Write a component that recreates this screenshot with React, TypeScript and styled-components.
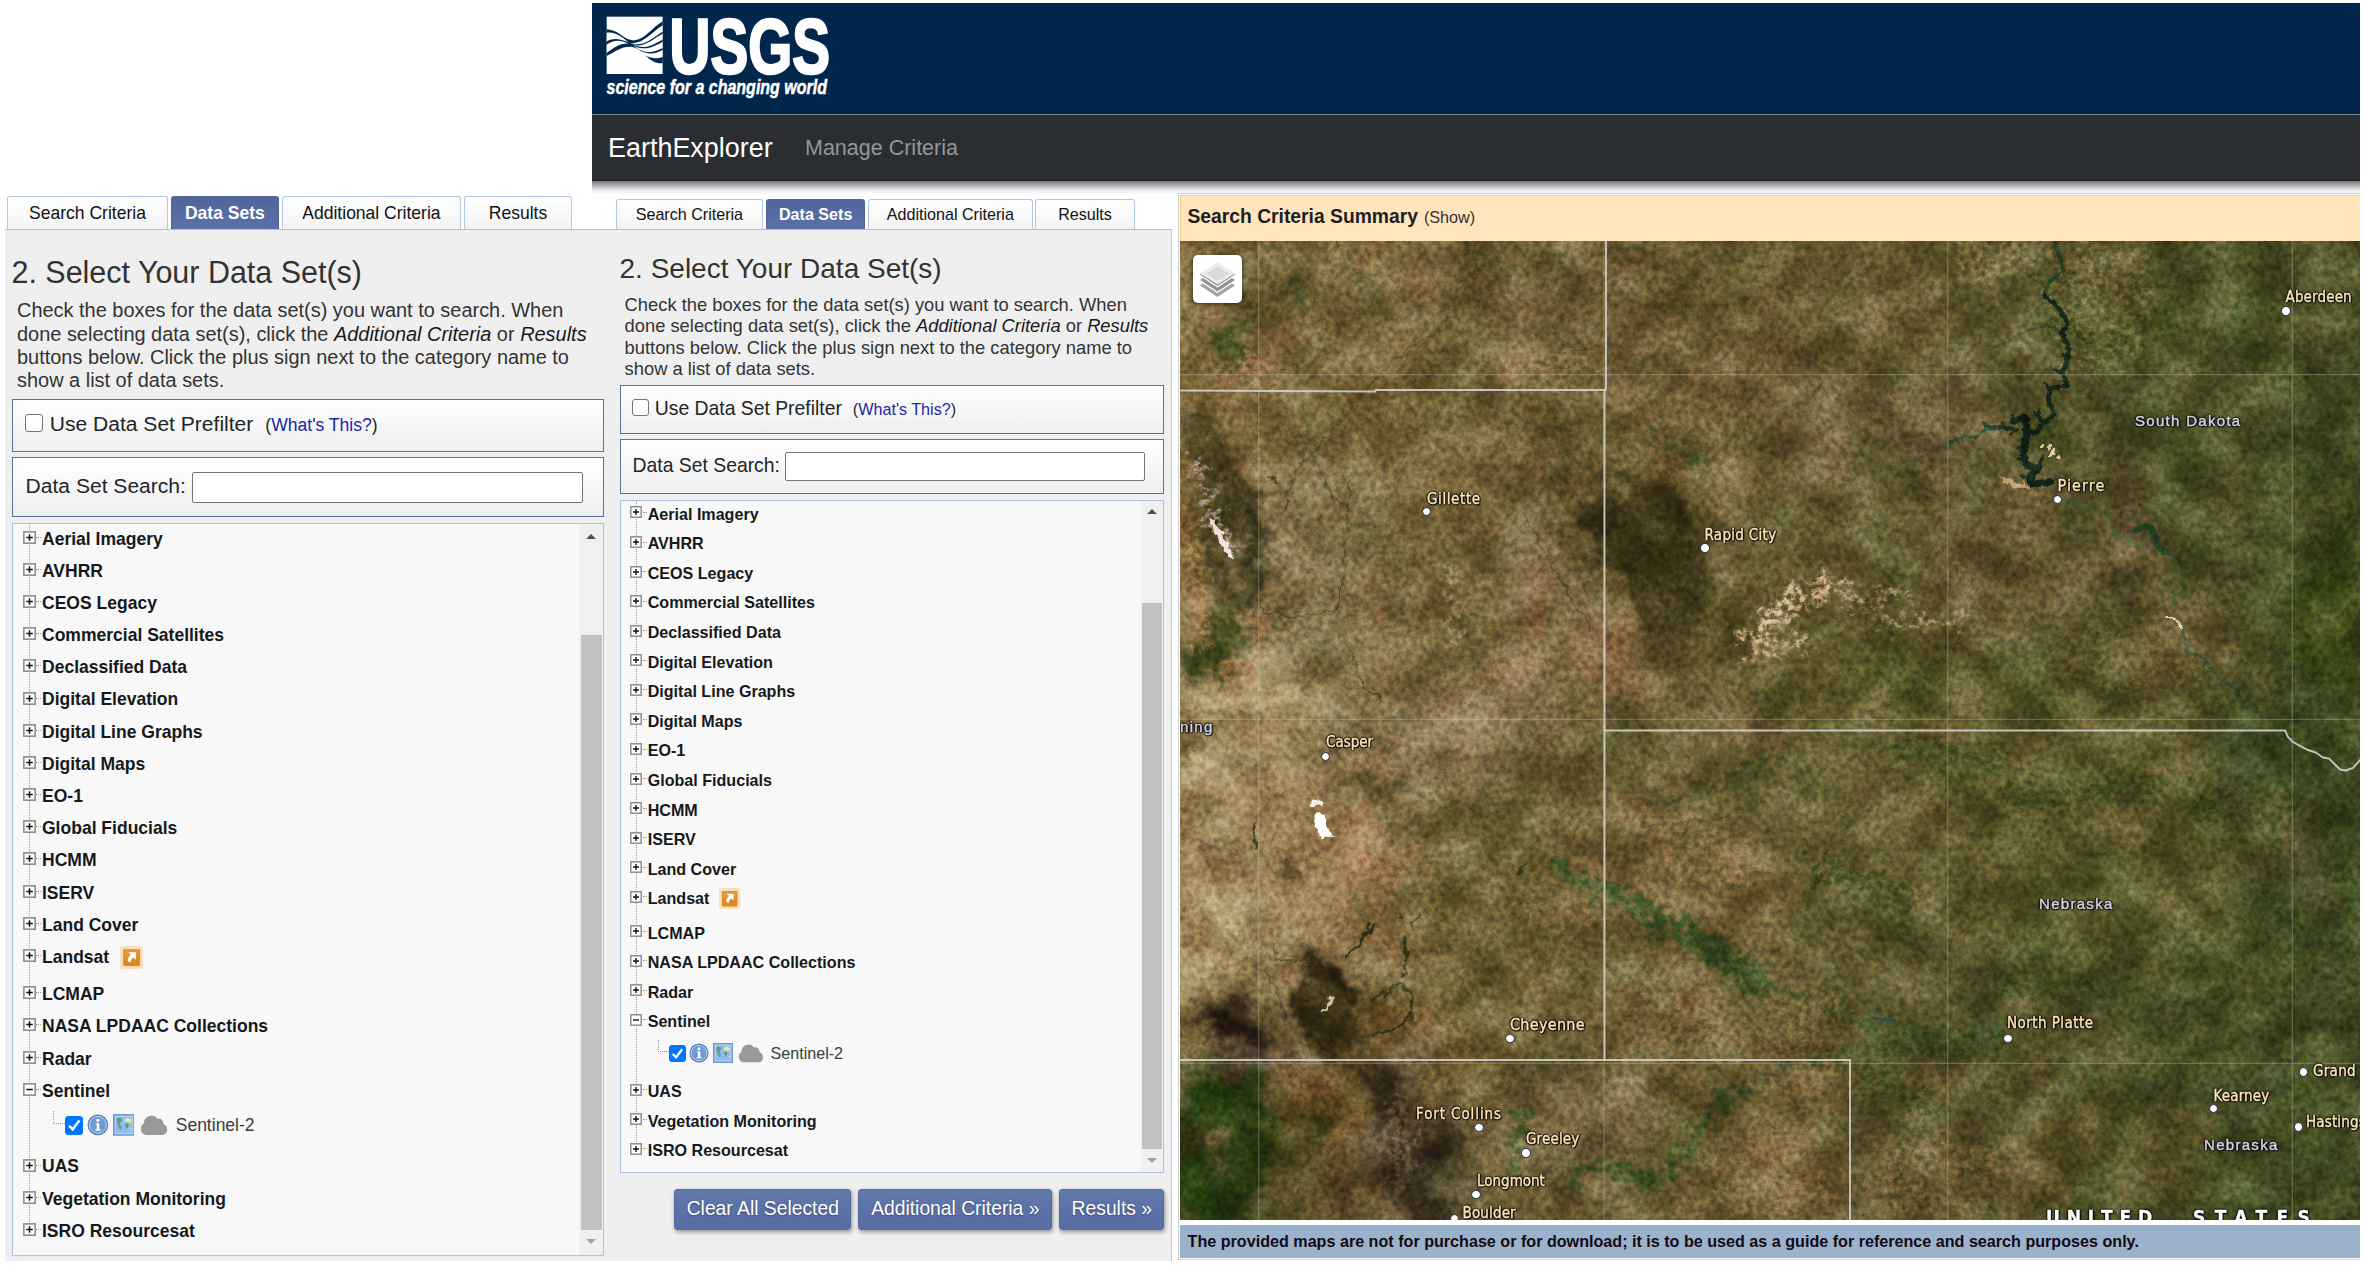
import React from 'react';
import styled, { createGlobalStyle, css, ThemeProvider } from 'styled-components';

const GlobalStyle = createGlobalStyle`
  html, body { margin: 0; padding: 0; background: #fff; }
  body { width: 2363px; height: 1266px; overflow: hidden; }
  *, *::before, *::after { box-sizing: border-box; }
`;

/* Panel dimensions are written at scale 1 and multiplied by the scale of the enclosing theme. */
const u = (n: number) => (p: any) => `${(n * p.theme.scale).toFixed(2)}px`;

const sans = `"Liberation Sans", Arial, sans-serif`;

const Page = styled.div`
  width: 2360px;
  height: 1261px;
  overflow: hidden;
  padding-top: 3px;
  font-family: ${sans};
  color: #212529;
  background: #fff;
`;

/* ---------- header ---------- */

const Header = styled.header`
  margin-left: 592px;
  height: 187px;
`;

const Brand = styled.div`
  height: 111px;
  background: #00264c;
  padding-left: 12px;
  svg { display: block; }
`;

const NavBar = styled.nav`
  height: 67px;
  display: flex;
  align-items: center;
  padding: 1px 18px 0;
  background: #2a2e32;
  border-top: 1px solid #85878d;
  border-bottom: 1px solid #1c1f24;
`;

const NavTitle = styled.span`
  font-size: 26.95px;
  color: #fff;
  width: 197px;
  margin-left: -2px;
`;

const NavLink = styled.span`
  font-size: 21.5px;
  color: #92979a;
`;

const NavShadow = styled.div`
  height: 13px;
  background: linear-gradient(#77777b, #b9b9bb 40%, #ececec 75%, #fff);
`;

/* ---------- data set panel ---------- */

const Body = styled.main`
  display: flex;
  height: 1071px;
  padding-left: 5px;
`;

const Panel = styled.section<{ $w: number; $pad: number; $edge?: boolean }>`
  width: ${(p) => p.$w}px;
  flex: none;
  height: 1071px;
  display: flex;
  flex-direction: column;
  overflow: hidden;
  --pad: ${(p) => p.$pad}px;
  ${(p) => p.$edge && css`.sheet { border-right: 1.5px solid #b4c8ec; }`}
`;

const Tabs = styled.div`
  height: 39px;
  flex: none;
  display: flex;
  align-items: flex-end;
  gap: ${u(2.7)};
  padding-left: calc(var(--pad) - ${u(4.4)});
`;

const Tab = styled.div<{ $w: number; $active?: boolean }>`
  width: ${(p) => u(p.$w)(p)};
  height: ${u(30.3)};
  display: flex;
  align-items: center;
  justify-content: center;
  font-size: ${u(16.1)};
  color: #111;
  border: 1px solid #b3c6ea;
  border-bottom: 0;
  border-radius: 3px 3px 0 0;
  background: linear-gradient(#fff, #f3f3f3);
  ${(p) =>
    p.$active &&
    css`
      color: #fff;
      font-weight: bold;
      border-color: #50659a;
      background: linear-gradient(#50659a, #5c71a8);
    `}
`;

const Sheet = styled.div`
  flex: 1;
  min-height: 0;
  background: #efefef;
  border-top: 1px solid #afc1e2;
  padding-left: var(--pad);
`;

const Inner = styled.div`
  width: ${u(544.3)};
`;

const Heading = styled.h2`
  margin: ${u(21.8)} 0 ${u(7.9)};
  font-weight: normal;
  font-size: ${u(28)};
  line-height: ${u(34)};
  margin-left: -0.5px;
  color: #333;
  white-space: nowrap;
`;

const Intro = styled.p`
  margin: 0 0 ${u(5.7)};
  padding-left: ${u(4.6)};
  font-size: ${u(18.34)};
  line-height: ${u(21.45)};
  color: #333;
  white-space: nowrap;
  em { color: #1a1a1a; }
`;

const Box = styled.div<{ $h: number }>`
  height: ${(p) => u(p.$h)(p)};
  margin-bottom: ${u(5.5)};
  display: flex;
  align-items: center;
  border: 1px solid #5872a3;
  background: linear-gradient(#fff, #eeeeee);
  padding: 0 0 ${u(1.7)} ${u(11.6)};
  font-size: ${u(19.35)};
  color: #212529;
  white-space: nowrap;
`;

const CheckBox = styled.span<{ $on?: boolean }>`
  width: ${u(17)};
  height: ${u(17)};
  flex: none;
  border: 1px solid #767676;
  border-radius: 3px;
  background: #fff;
  display: flex;
  ${(p) => p.$on && css`background: #0075ff; border-color: #0075ff;`}
  svg { width: 100%; height: 100%; }
`;

const PrefilterCheckBox = styled(CheckBox)`
  margin: ${u(-2)} 0 0 ${u(-0.6)};
`;

const BoxLabel = styled.span`
  margin-left: ${u(5.8)};
`;

const Hint = styled.span`
  margin: ${u(2)} 0 0 ${u(11)};
  font-size: ${u(16.15)};
  a { color: #1a27a8; }
`;

const SearchLabel = styled.span`
  width: ${u(152.5)};
`;

const SearchField = styled.input`
  width: ${u(360)};
  height: ${u(28.5)};
  margin: ${u(1.4)} 0 0;
  padding: 0;
  border: 1px solid #767676;
  border-radius: 2px;
  background: #fff;
`;

const ListBox = styled.div`
  height: ${u(673.7)};
  display: flex;
  overflow: hidden;
  background: #f8f8f8;
  border: 1px solid #b0c3e6;
`;

const Tree = styled.ul`
  flex: 1;
  height: max-content;
  margin: ${u(-1.15)} 0 0;
  padding: 0;
  list-style: none;
  background-image: repeating-linear-gradient(#9a9a9a 0 1px, transparent 1px 2px);
  background-repeat: no-repeat;
  background-size: 1px calc(100% - ${u(15)});
  background-position: ${u(14.6)} 0;
`;

const Row = styled.li`
  height: ${u(29.58)};
  display: flex;
  align-items: center;
  padding-left: ${u(9)};
  font-size: ${u(16.1)};
  font-weight: bold;
  color: #16181b;
  white-space: nowrap;
`;

const TallRow = styled(Row)`
  height: ${u(34.3)};
  padding-bottom: ${u(4.7)};
`;

const Toggle = styled.svg`
  width: ${u(12)};
  height: ${u(12)};
  flex: none;
  margin-top: ${u(-3.6)};
`;

const Dots = styled.span`
  width: ${u(4)};
  margin: ${u(-3.6)} ${u(1.2)} 0 ${u(0.5)};
  border-top: 1px dotted #9a9a9a;
`;

const OrangeIcon = styled.svg`
  width: ${u(21.4)};
  height: ${u(21.4)};
  margin-left: ${u(9.8)};
`;

const ChildRow = styled.li`
  height: ${u(40.1)};
  display: flex;
  align-items: center;
  padding: 0 0 ${u(7)} ${u(36.7)};
  font-size: ${u(16.1)};
  color: #3a3d40;
  svg { flex: none; }
`;

const Branch = styled.span`
  width: ${u(11)};
  height: ${u(12)};
  margin-top: ${u(-15)};
  border-left: 1px dotted #9a9a9a;
  border-bottom: 1px dotted #9a9a9a;
`;

const InfoSvg = styled.svg`
  width: ${u(20)};
  height: ${u(20)};
  margin-left: ${u(3.6)};
`;

const MapSvg = styled.svg`
  width: ${u(20)};
  height: ${u(20)};
  margin-left: ${u(3.4)};
`;

const CloudSvg = styled.svg`
  width: ${u(26.5)};
  height: ${u(19)};
  margin: 0 ${u(6)} 0 ${u(5.4)};
`;

const ScrollBar = styled.div`
  width: ${u(22.2)};
  flex: none;
  display: flex;
  flex-direction: column;
  align-items: center;
  background: #f0f0f0;
`;

const Arrow = styled.span<{ $down?: boolean }>`
  width: 0;
  height: 0;
  border: ${u(5)} solid transparent;
  border-top-width: 0;
  border-bottom: ${u(5)} solid #505050;
  margin-top: ${u(8.5)};
  ${(p) => p.$down && css`transform: rotate(180deg); border-bottom-color: #a3a3a3;`}
`;

const Thumb = styled.span`
  width: ${u(19.5)};
  height: ${u(546.5)};
  margin-top: ${u(88.9)};
  background: #c1c1c1;
`;

const Actions = styled.div`
  display: flex;
  justify-content: flex-end;
  gap: 7px;
  margin-top: 16px;
`;

const ActionButton = styled.button<{ $w: number }>`
  width: ${(p) => p.$w}px;
  height: 41px;
  padding: 0 0 2px;
  border: 1px solid #566b9f;
  border-radius: 3px;
  font-family: ${sans};
  font-size: 19.3px;
  color: #fff;
  background: linear-gradient(#6279ad, #566b9f);
  box-shadow: 1px 2px 4px rgba(0, 0, 0, 0.4);
  text-shadow: 0 1px 2px rgba(0, 0, 0, 0.35);
`;

/* ---------- map ---------- */

const MapFrame = styled.section`
  margin: 3px 0 0 6px;
  flex: 1;
  min-width: 0;
  display: flex;
  flex-direction: column;
  background: #fff;
  border: 1px solid #cbcfd6;
  border-right: 0;
  padding: 1px 0 0 1px;
  height: 1067px;
`;

const Summary = styled.div`
  height: 46px;
  flex: none;
  display: flex;
  align-items: baseline;
  padding: 9.5px 0 0 6.5px;
  gap: 6px;
  background: #ffe4bc;
  border: 1px solid #f6cb80;
  border-width: 1px 0 0 1px;
  font-size: 16.2px;
  line-height: 22px;
  color: #333;
  b { font-size: 19.3px; color: #1c1f22; }
`;

const MapCanvas = styled.div`
  position: relative;
  height: 979px;
  flex: none;
  overflow: hidden;
  background: #6e5f35;
`;

const Imagery = styled.svg`
  display: block;
`;

const GrainLayer = styled.rect<{ $mode: string; $strength: number }>`
  mix-blend-mode: ${(p) => p.$mode};
  opacity: ${(p) => p.$strength};
`;

const Disclaimer = styled.div`
  height: 32.5px;
  margin-top: 5px;
  flex: none;
  display: flex;
  align-items: center;
  padding: 0 0 0 7.6px;
  background: #9bb2cc;
  font-size: 16.14px;
  font-weight: bold;
  color: #120a14;
  white-space: nowrap;
`;

const LayersButton = styled.div`
  position: absolute;
  left: 13px;
  top: 14px;
  width: 49px;
  height: 48px;
  border-radius: 5px;
  background: #fff;
  box-shadow: 0 1px 5px rgba(0, 0, 0, 0.6);
  display: flex;
  align-items: center;
  justify-content: center;
`;

const outline =
  '0 0 1px #111, 0 0 2px #111, 0 0 3px #111, 1px 0 1px #111, -1px 0 1px #111, 0 1px 1px #111, 0 -1px 1px #111, 1px 1px 1px #111';

const City = styled.span<{ $x: number; $y: number; $s?: number; $ls?: number }>`
  position: absolute;
  left: ${(p) => p.$x - 1180}px;
  top: ${(p) => p.$y - 241 - 14.5}px;
  line-height: 19px;
  font-family: "DejaVu Sans Condensed", "DejaVu Sans", sans-serif;
  font-stretch: condensed;
  font-size: ${(p) => p.$s ?? 15}px;
  letter-spacing: ${(p) => p.$ls ?? 0.15}px;
  color: #fbe3b2;
  -webkit-text-stroke: 0.35px #fbe3b2;
  text-shadow: ${outline};
  white-space: nowrap;
`;

const StateName = styled(City)`
  font-family: ${sans};
  font-size: 15px;
  letter-spacing: 1.3px;
  color: #d4d2e0;
  -webkit-text-stroke: 0.4px #d4d2e0;
`;

const Country = styled(City)`
  font-family: "DejaVu Sans", sans-serif;
  font-weight: bold;
  font-size: 19px;
  letter-spacing: ${(p) => p.$ls ?? 6}px;
  color: #fff;
  -webkit-text-stroke: 0.3px #fff;
`;

const Pin = styled.i<{ $x: number; $y: number }>`
  position: absolute;
  left: ${(p) => p.$x - 1184.7}px;
  top: ${(p) => p.$y - 245.7}px;
  width: 9.5px;
  height: 9.5px;
  border-radius: 50%;
  background: #fff;
  border: 1.5px solid #1b1f33;
`;

/* ---------- drawings ---------- */

const Logo = () => (
  <svg width="230" height="111" viewBox="604 3 230 111">
    <g transform="translate(580 0) scale(.33333)">
      <rect x="80" y="50" width="168" height="172" fill="#fff" />
      <path
        d="M80 88C120 90 132 124 165 121C198 116 215 84 248 64V190C205 192 195 152 158 141C130 136 110 152 80 168Z"
        fill="#00264c"
      />
      <g fill="#fff">
        <path d="M80 98C108 94 126 112 147 127C120 118 104 112 80 124Z" />
        <path d="M80 134C104 118 120 120 147 131C120 129 104 142 80 159Z" />
        <path d="M150 129C190 134 215 96 248 76V95C215 114 190 144 150 129Z" />
        <path d="M155 133C192 146 218 116 248 101V119C218 134 195 152 155 133Z" />
        <path d="M160 137C195 154 222 140 248 125V144C222 158 195 164 160 137Z" />
        <path d="M166 142C198 168 225 162 248 150V170C225 180 198 176 166 142Z" />
      </g>
    </g>
    <text x="669.500" y="73.200" fontFamily="Liberation Sans, Arial, sans-serif" fontWeight="bold" fontSize="78"
      textLength="160.500" lengthAdjust="spacingAndGlyphs" fill="#fff" stroke="#fff" strokeWidth="2.600">USGS</text>
    <text x="606.500" y="93.800" fontFamily="Liberation Sans, Arial, sans-serif" fontWeight="bold" fontStyle="italic"
      fontSize="20.500" textLength="220.500" lengthAdjust="spacingAndGlyphs" fill="#fff" stroke="#fff" strokeWidth=".5">
      science for a changing world
    </text>
  </svg>
);

const ToggleIcon = ({ open }: { open?: boolean }) => (
  <Toggle viewBox="0 0 12 12">
    <rect x=".8" y=".8" width="10.4" height="10.4" fill="#fff" stroke="#8f8f8f" strokeWidth="1.5" />
    <path d={open ? 'M3 6H9' : 'M3 6H9M6 3V9'} stroke="#111" strokeWidth="1.4" />
  </Toggle>
);

const LandsatIcon = () => (
  <OrangeIcon viewBox="0 0 22 22">
    <rect width="22" height="22" rx="3" fill="#f7dfc0" />
    <rect x="3" y="3" width="16" height="16" rx="1" fill="#dc8a22" />
    <rect x="4" y="4" width="14" height="6" fill="#e39a3e" />
    <path d="M8 6H15V13L12.9 10.9C11 12 10.3 13.2 10 15.5L7.3 14.2C7.5 11.5 8.5 9.9 10.2 8.3Z" fill="#fff" />
  </OrangeIcon>
);

const InfoIcon = () => (
  <InfoSvg viewBox="0 0 20 20">
    <circle cx="10" cy="10" r="9.5" fill="#4f80bd" />
    <circle cx="10" cy="10" r="7.8" fill="#6f9bd0" stroke="#c9dcf0" strokeWidth=".9" />
    <circle cx="10" cy="5.8" r="1.5" fill="#fff" />
    <path d="M8 8.5H11.3V14H12.5V15.3H7.8V14H9V9.7H8Z" fill="#fff" />
  </InfoSvg>
);

const FootprintIcon = () => (
  <MapSvg viewBox="0 0 20 20">
    <rect x=".7" y=".7" width="18.6" height="18.6" fill="#b4d4f8" stroke="#6f95cf" strokeWidth="1.4" />
    <rect x="2.5" y="2.5" width="15" height="15" fill="#8fbdf0" />
    <path d="M3.500 4.500L5.500 3.500L8 4L8.500 6L6.500 8L6.500 10L8 12L7 15L5.500 12.500L4.500 9.500L3.500 7Z" fill="#5f9a82" />
    <path d="M10.5 5L13 3.5L17 5L16.5 8L14.5 8L13 7L11 7.5Z" fill="#ece7a0" />
    <path d="M11 9L14 9L14.5 11L12.8 13.5L11.5 11Z" fill="#5c9a80" />
    <path d="M15 12.5L16.8 13L16 14.5Z" fill="#dfe09a" />
  </MapSvg>
);

const CloudIcon = () => (
  <CloudSvg viewBox="0 0 27 19">
    <path
      d="M6 18.5A5.8 5.8 0 0 1 3.6 7.8A7.2 7.2 0 0 1 16.5 3.3A4.3 4.3 0 0 1 21.8 8.2A5.4 5.4 0 0 1 21.5 18.5Z"
      fill="#999"
    />
  </CloudSvg>
);

const LayersIcon = () => (
  <svg width="37" height="37" viewBox="0 0 37 37">
    <path d="M18.5 36L1 24.5L4 22.5L18.5 32L33 22.5L36 24.5Z" fill="#a5a5a5" />
    <path d="M18.5 30.5L1 19L4 17L18.5 26.5L33 17L36 19Z" fill="#949494" />
    <path d="M18.5 25L1 13.5L18.5 2L36 13.5Z" fill="#8f8f8f" />
    <path d="M18.5 23.5L1 12.5L18.5 1.5L36 12.5Z" fill="#ececec" />
    <path d="M18.5 20L7 12.5L18.5 5.5L30 12.5Z" fill="#dadada" />
  </svg>
);

/* Soft ground-colour patches: centre, radii, rotation, colour, opacity. */
type Patch = [number, number, number, number, number, string, number];
const patches: Patch[] = [
  [1300, 310, 150, 70, 0, '#7a663b', 0.8],
  [1520, 290, 110, 60, 0, '#74603a', 0.7],
  [1800, 290, 170, 90, 0, '#6a5a31', 0.8],
  [1720, 370, 110, 50, 0, '#745c36', 0.7],
  [2230, 280, 150, 90, 0, '#535328', 0.8],
  [1290, 580, 60, 110, 0, '#96835c', 0.85],
  [1350, 560, 60, 100, 0, '#84734b', 0.8],
  [1260, 710, 100, 60, 0, '#ad9a6b', 0.9],
  [1280, 830, 120, 110, 0, '#ad9163', 0.95],
  [1215, 940, 60, 60, 0, '#b09a68', 0.8],
  [1300, 960, 60, 50, 0, '#9c855a', 0.7],
  [1190, 600, 26, 80, 0, '#a07a4a', 0.8],
  [1380, 860, 40, 90, -20, '#a37c50', 0.8],
  [1440, 720, 120, 60, -20, '#957b58', 0.85],
  [1450, 800, 60, 60, 0, '#80704a', 0.7],
  [1560, 590, 26, 110, -30, '#927658', 0.8],
  [1600, 650, 34, 60, -30, '#a07450', 0.7],
  [1430, 930, 30, 150, 0, '#7d6a3c', 0.8],
  [1490, 930, 70, 140, 0, '#6e6233', 0.85],
  [1560, 430, 55, 50, 0, '#5b4d25', 0.5],
  [1720, 620, 90, 90, 0, '#67592f', 0.6],
  [1660, 460, 70, 50, 0, '#7b6038', 0.6],
  [1900, 430, 140, 50, -10, '#76613f', 0.75],
  [2000, 560, 90, 80, 0, '#6f5a36', 0.7],
  [2150, 560, 80, 90, 0, '#6b5432', 0.6],
  [2240, 430, 120, 130, 0, '#4c5026', 0.6],
  [1900, 680, 170, 40, 0, '#5c5a28', 0.7],
  [2340, 620, 40, 110, 0, '#33420f', 0.8],
  [2180, 660, 70, 60, 0, '#69552f', 0.6],
  [2310, 820, 80, 150, 0, '#3c4a20', 0.8],
  [2080, 830, 190, 140, 0, '#605b2c', 0.8],
  [1820, 820, 120, 110, 0, '#6c6236', 0.8],
  [1690, 880, 110, 70, 20, '#7d653b', 0.8],
  [2290, 860, 45, 16, 35, '#6f5538', 0.6],
  [2240, 1010, 140, 80, 0, '#484f24', 0.8],
  [1680, 1010, 110, 50, 0, '#7f6940', 0.75],
  [1800, 1110, 60, 60, 0, '#84683f', 0.7],
  [1760, 1190, 90, 50, 0, '#80653c', 0.7],
  [1930, 1180, 90, 50, 0, '#745f38', 0.75],
  [1900, 1080, 90, 50, 0, '#5a5428', 0.6],
  [2110, 1150, 110, 70, 0, '#5f552b', 0.8],
  [2060, 1050, 60, 14, 15, '#6e5630', 0.6],
  [1580, 1130, 80, 60, 0, '#7b6745', 0.75],
  [1215, 1165, 75, 100, 0, '#28380f', 1],
  [1200, 1130, 22, 22, 0, '#7a6138', 0.7],
  [1325, 1120, 38, 70, 0, '#755828', 0.9],
  [1410, 1160, 48, 100, -10, '#30241a', 0.95],
  [1330, 1195, 30, 30, 0, '#4b371c', 0.8],
  [1250, 1050, 60, 28, 25, '#3c2c1e', 0.85],
  [1385, 1040, 30, 50, -15, '#5f4822', 0.6],
  [1412, 1030, 16, 34, 10, '#a0763c', 0.7],
];

const forests: Patch[] = [
  [1205, 440, 22, 36, -25, '#463f1e', 0.8],
  [1226, 490, 22, 50, -30, '#3f3a1c', 0.8],
  [1252, 560, 14, 70, 0, '#3b381c', 0.85],
  [1215, 560, 16, 60, 0, '#45401e', 0.8],
  [1222, 640, 14, 50, 15, '#3d4518', 0.8],
  [1197, 655, 22, 22, 0, '#2e3d14', 0.8],
  [1226, 340, 8, 24, 15, '#2d4415', 0.85],
  [1248, 320, 10, 8, 0, '#2d4415', 0.7],
  [1300, 290, 12, 18, 0, '#3f451d', 0.7],
  [1368, 300, 12, 32, 10, '#4a491f', 0.7],
  [1640, 530, 56, 52, 0, '#3d3618', 0.92],
  [1668, 580, 38, 70, -12, '#3d3718', 0.85],
  [1604, 500, 22, 20, 0, '#423a1c', 0.8],
  [1560, 455, 10, 34, 15, '#484120', 0.7],
  [1560, 420, 30, 30, 0, '#574b24', 0.5],
  [1580, 565, 8, 50, -25, '#4a3c20', 0.4],
  [1225, 762, 50, 5, 20, '#6a5f37', 0.6],
  [1372, 782, 45, 8, -10, '#4f4c24', 0.6],
  [1390, 815, 14, 40, -40, '#5e5530', 0.6],
  [1290, 868, 13, 10, 0, '#4d3b1f', 0.85],
  [1206, 850, 15, 5, 15, '#4d3b1f', 0.8],
  [1240, 870, 26, 5, 12, '#6d5434', 0.7],
  [1300, 957, 7, 9, 0, '#463820', 0.8],
  [1325, 1005, 26, 48, -12, '#2e270f', 0.95],
  [1342, 1040, 18, 26, -20, '#3a2f14', 0.8],
  [1235, 1030, 46, 16, 35, '#2a1e16', 0.9],
  [1375, 1090, 10, 30, -30, '#2c2015', 0.8],
  [1210, 1100, 26, 26, 0, '#24400f', 0.85],
  [1250, 1130, 22, 60, 0, '#26380f', 0.85],
  [1205, 1190, 30, 30, 0, '#22400f', 0.8],
];

const drawPatch = ([cx, cy, rx, ry, rot, fill, o]: Patch, i: number) => (
  <ellipse key={i} cx={cx} cy={cy} rx={rx} ry={ry} fill={fill} opacity={o} transform={`rotate(${rot} ${cx} ${cy})`} />
);

const Satellite = () => (
  <Imagery width="1180" height="979" viewBox="1180 241 1180 979">
    <defs>
      <linearGradient id="ground" x1="0" x2="1" y1="0" y2="0.15">
        <stop offset="0" stopColor="#88703f" />
        <stop offset=".3" stopColor="#7a663b" />
        <stop offset=".55" stopColor="#6a5e33" />
        <stop offset=".8" stopColor="#56552b" />
        <stop offset="1" stopColor="#454e24" />
      </linearGradient>
      <filter id="terrain" x="-5%" y="-5%" width="110%" height="110%" colorInterpolationFilters="sRGB">
        <feGaussianBlur stdDeviation="18" result="b" />
        <feTurbulence type="fractalNoise" baseFrequency=".014" numOctaves="6" seed="4" result="n" />
        <feDisplacementMap in="b" in2="n" scale="110" xChannelSelector="R" yChannelSelector="G" />
      </filter>
      <filter id="woods" x="-5%" y="-5%" width="110%" height="110%" colorInterpolationFilters="sRGB">
        <feGaussianBlur stdDeviation="6" result="b" />
        <feTurbulence type="fractalNoise" baseFrequency=".035" numOctaves="5" seed="9" result="n" />
        <feDisplacementMap in="b" in2="n" scale="50" xChannelSelector="R" yChannelSelector="G" />
      </filter>
      <filter id="rough" x="-5%" y="-5%" width="110%" height="110%" colorInterpolationFilters="sRGB">
        <feTurbulence type="fractalNoise" baseFrequency=".1" numOctaves="3" seed="2" result="n" />
        <feDisplacementMap in="SourceGraphic" in2="n" scale="11" xChannelSelector="R" yChannelSelector="G" result="d" />
        <feGaussianBlur in="d" stdDeviation=".6" />
      </filter>
      <filter id="shreds" x="-5%" y="-5%" width="110%" height="110%" colorInterpolationFilters="sRGB">
        <feGaussianBlur in="SourceGraphic" stdDeviation="3" result="s" />
        <feTurbulence type="fractalNoise" baseFrequency=".07" numOctaves="5" seed="12" result="n" />
        <feDisplacementMap in="s" in2="n" scale="46" xChannelSelector="R" yChannelSelector="G" result="d" />
        <feTurbulence type="fractalNoise" baseFrequency=".17 .2" numOctaves="4" seed="5" result="t" />
        <feColorMatrix in="t" type="matrix" values="0 0 0 0 0 0 0 0 0 0 0 0 0 0 0 4 0 0 0 -1.5" result="m" />
        <feComposite in="d" in2="m" operator="in" result="c" />
        <feGaussianBlur in="c" stdDeviation=".7" />
      </filter>
      <filter id="valley" x="-5%" y="-5%" width="110%" height="110%" colorInterpolationFilters="sRGB">
        <feGaussianBlur in="SourceGraphic" stdDeviation="3.500" result="s" />
        <feTurbulence type="fractalNoise" baseFrequency=".06" numOctaves="5" seed="17" result="n" />
        <feDisplacementMap in="s" in2="n" scale="34" xChannelSelector="R" yChannelSelector="G" result="d" />
        <feTurbulence type="fractalNoise" baseFrequency=".11" numOctaves="4" seed="8" result="t" />
        <feColorMatrix in="t" type="matrix" values="0 0 0 0 0 0 0 0 0 0 0 0 0 0 0 3 0 0 0 -.7" result="m" />
        <feComposite in="d" in2="m" operator="in" />
      </filter>
      <filter id="grainLarge" x="0" y="0" width="100%" height="100%" colorInterpolationFilters="sRGB">
        <feTurbulence type="fractalNoise" baseFrequency=".02 .024" numOctaves="8" seed="21" />
        <feColorMatrix type="matrix" values="2 0 0 0 -.55 2 0 0 0 -.55 2 0 0 0 -.55 0 0 0 0 1" />
      </filter>
      <filter id="grainStreak" x="0" y="0" width="100%" height="100%" colorInterpolationFilters="sRGB">
        <feTurbulence type="fractalNoise" baseFrequency=".012 .04" numOctaves="6" seed="3" />
        <feColorMatrix type="matrix" values="2.2 0 0 0 -.6 2.2 0 0 0 -.65 2.2 0 0 0 -.75 0 0 0 0 1" />
      </filter>
      <filter id="grainFine" x="0" y="0" width="100%" height="100%" colorInterpolationFilters="sRGB">
        <feTurbulence type="fractalNoise" baseFrequency=".17 .155" numOctaves="5" seed="7" />
        <feColorMatrix type="matrix" values="1.7 0 0 0 -.37 1.5 .2 0 0 -.37 1.5 0 .2 0 -.37 0 0 0 0 1" />
      </filter>
      <filter id="greens" x="0" y="0" width="100%" height="100%" colorInterpolationFilters="sRGB">
        <feTurbulence type="fractalNoise" baseFrequency=".014" numOctaves="8" seed="33" />
        <feColorMatrix type="matrix" values="0 0 0 0 .25 0 0 0 0 .33 0 0 0 0 .13 3 0 0 0 -1.35" />
      </filter>
      <filter id="browns" x="0" y="0" width="100%" height="100%" colorInterpolationFilters="sRGB">
        <feTurbulence type="fractalNoise" baseFrequency=".02" numOctaves="8" seed="51" />
        <feColorMatrix type="matrix" values="0 0 0 0 .6 0 0 0 0 .46 0 0 0 0 .3 3.5 0 0 0 -1.85" />
      </filter>
      <linearGradient id="eastFade" x1="0" x2="1">
        <stop offset="0" stopColor="#fff" stopOpacity=".3" />
        <stop offset="1" stopColor="#fff" stopOpacity=".8" />
      </linearGradient>
      <mask id="east">
        <rect x="1180" y="241" width="1180" height="979" fill="url(#eastFade)" />
      </mask>
      <linearGradient id="westFade" x1="0" x2="1">
        <stop offset="0" stopColor="#fff" stopOpacity=".6" />
        <stop offset=".5" stopColor="#fff" stopOpacity=".35" />
        <stop offset="1" stopColor="#fff" stopOpacity=".15" />
      </linearGradient>
      <mask id="west">
        <rect x="1180" y="241" width="1180" height="979" fill="url(#westFade)" />
      </mask>
    </defs>

    <rect x="1180" y="241" width="1180" height="979" fill="url(#ground)" />
    <g filter="url(#terrain)">{patches.map(drawPatch)}</g>
    <g mask="url(#east)" opacity=".6">
      <rect x="1180" y="241" width="1180" height="979" filter="url(#greens)" />
    </g>
    <g mask="url(#west)">
      <rect x="1180" y="241" width="1180" height="979" filter="url(#browns)" />
    </g>
    <g mask="url(#west)">
      <g transform="rotate(-58 1500 730)">
        <rect x="700" y="-100" width="1700" height="1700" filter="url(#grainStreak)" opacity=".12" />
      </g>
    </g>
    <g filter="url(#woods)">{forests.map(drawPatch)}</g>

    {/* irrigated river valleys */}
    <g fill="none" stroke="#405426" strokeLinecap="round" filter="url(#valley)">
      <path d="M1555 866L1610 895" strokeWidth="15" stroke="#3d5728" />
      <path d="M1610 893L1680 925L1725 960L1765 985" strokeWidth="24" stroke="#3b5527" />
      <path d="M1655 932H1690" strokeWidth="14" stroke="#3d5728" />
      <path d="M1765 980L1830 1010L1880 1027L1930 1035L2000 1030" strokeWidth="9" />
      <path d="M1575 1175L1600 1165L1640 1182L1670 1172L1700 1130L1725 1098" strokeWidth="17" />
      <path d="M1725 1098L1780 1070L1850 1052L1950 1038L2010 1040" strokeWidth="12" stroke="#43522a" />
      <path d="M2040 1045L2110 1080L2200 1100L2290 1080" strokeWidth="8" stroke="#41502a" />
      <path d="M1660 805L1720 785L1765 765" strokeWidth="14" stroke="#4a5028" />
      <path d="M1515 1110V1140M1530 1110L1510 1180" strokeWidth="12" />
      <path d="M1650 435L1710 465" strokeWidth="8" stroke="#46532c" />
      <path d="M1855 1100V1210M1900 1110V1200" strokeWidth="10" stroke="#4a4f27" opacity=".7" />
    </g>
    <g fill="none" stroke="#3f4b20" strokeLinecap="round" filter="url(#shreds)">
      <path d="M2015 795H2060M2090 790H2150" strokeWidth="30" />
      <path d="M2000 985H2110M2190 800L2290 820M1900 750L2000 760" strokeWidth="22" />
      <path d="M1870 1080L1930 1110M1890 1050H1980M1820 870L1910 900" strokeWidth="26" />
    </g>

    {/* cropland speckle */}
    <g filter="url(#shreds)" opacity=".38">
      <ellipse cx="2100" cy="300" rx="50" ry="80" fill="#a3955c" />
      <ellipse cx="1990" cy="255" rx="40" ry="22" fill="#b39a68" />
      <ellipse cx="2130" cy="660" rx="80" ry="40" fill="#9b804f" opacity=".8" />
      <ellipse cx="1710" cy="860" rx="50" ry="28" fill="#b08f60" />
      <ellipse cx="1690" cy="1020" rx="80" ry="26" fill="#ad875e" />
      <ellipse cx="1770" cy="1180" rx="60" ry="60" fill="#a87f55" />
      <ellipse cx="1940" cy="1180" rx="70" ry="40" fill="#a57f58" />
      <ellipse cx="1800" cy="1060" rx="50" ry="40" fill="#a88057" />
      <ellipse cx="1800" cy="1010" rx="50" ry="20" fill="#a88057" />
      <ellipse cx="1400" cy="1150" rx="14" ry="60" fill="#a5855f" />
      <ellipse cx="1550" cy="365" rx="50" ry="18" fill="#bb9d74" />
      <ellipse cx="1560" cy="910" rx="50" ry="20" fill="#ab8a60" />
    </g>

    {/* badlands and bare rock */}
    <g filter="url(#shreds)" fill="none" stroke="#d9bd98" strokeLinecap="round">
      <path d="M1752 638L1790 604L1828 586" strokeWidth="24" />
      <path d="M1752 652L1800 642" strokeWidth="14" opacity=".8" />
      <path d="M1828 586L1845 598L1862 600L1905 593" strokeWidth="8" opacity=".85" />
      <path d="M1872 622L1930 622L1962 620" strokeWidth="9" opacity=".7" />
      <path d="M1196 462L1210 510L1232 548" strokeWidth="11" stroke="#d3bdb4" opacity=".8" />
      <path d="M1250 360L1264 385" strokeWidth="20" stroke="#bd8b66" opacity=".8" />
      <path d="M1184 520L1200 590L1205 640" strokeWidth="14" stroke="#c08a58" opacity=".7" />
      <path d="M1255 610L1262 660L1215 680" strokeWidth="8" stroke="#b87d45" opacity=".8" />
      <path d="M1450 565L1455 640" strokeWidth="5" stroke="#c3a684" />
    </g>
    <g filter="url(#valley)" fill="none" stroke="#cdb68a" strokeLinecap="round" opacity=".55">
      <path d="M1190 710L1250 700M1195 890L1240 930M1210 960H1240M1200 760L1180 790M1290 700L1250 690" strokeWidth="20" />
      <path d="M1350 860L1390 880" strokeWidth="20" stroke="#c08a5c" />
    </g>

    <g filter="url(#rough)" fill="#f2e3dc">
      <path d="M1209 518L1216 519L1226 542L1234 556L1228 556L1217 540Z" />
      <path d="M1316 814L1322 812L1326 826L1333 836L1322 838L1314 826Z" fill="#fff" />
      <ellipse cx="1315" cy="801" rx="4" ry="3.5" fill="#f7f1ea" />
      <path d="M1320 1012L1332 996L1336 998L1324 1010Z" fill="#cbb68c" />
    </g>

    {/* creeks */}
    <g fill="none" stroke="#4a4526" strokeWidth="1.8" opacity=".6" filter="url(#rough)">
      <path d="M1338 241L1332 258M1480 260L1450 300L1445 330L1410 345L1380 375L1350 410L1320 445L1295 470L1285 510" />
      <path d="M1350 480L1345 560L1340 600L1332 612L1290 616L1265 612L1250 590" />
      <path d="M1525 515L1560 580L1590 630M1310 450L1350 530M1600 345L1575 352" />
      <path d="M1345 640L1365 690L1385 700M1640 825L1700 820L1750 818" />
      <path d="M1255 965L1275 985L1285 1020M1275 940L1275 960H1300" />
    </g>
    <g fill="none" stroke="#2e3619" strokeWidth="3" opacity=".8" filter="url(#rough)">
      <path d="M1345 958L1365 938L1373 922M1407 935L1404 978M1370 1000L1400 985L1412 992L1412 1015L1395 1030L1370 1035" />
      <path d="M1398 915L1404 920M1412 928L1418 916M1256 822L1254 850M1516 872L1526 866M1270 475L1277 487" />
    </g>

    {/* Missouri reservoirs */}
    <g transform="translate(1760 180) scale(.3846 .3444)" fill="none" strokeLinecap="round" strokeLinejoin="round">
      <g filter="url(#rough)">
        <path d="M765 180L782 230L788 265L755 290L738 335" stroke="#2f4a2b" strokeWidth="10" />
        <path d="M690 270L740 310M660 455L700 435L750 422L785 440M610 485L655 465" stroke="#3d4729" strokeWidth="6" />
        <path d="M738 335L775 370L800 415L785 445L803 490L798 530L785 560L800 597L755 605L750 640L765 680L735 710L715 735L692 725" stroke="#18291a" strokeWidth="13" />
        <path d="M660 700L690 690L692 740L685 800L695 830L725 835L702 860L708 882L755 878" stroke="#102117" strokeWidth="20" />
        <path d="M655 685L670 700M650 740L670 725M715 675L735 705M725 672L728 700M740 590L755 610M725 830L735 800M670 780L685 770M670 810L688 815M765 550L785 560M680 860L705 870M785 505L800 510" stroke="#18291a" strokeWidth="7" />
        <path d="M490 765L530 742L560 748L590 720L655 722" stroke="#2f4e2f" strokeWidth="8" />
        <path d="M585 715L660 720M580 705L600 722M630 705L640 722" stroke="#183020" strokeWidth="9" />
        <path d="M490 765L400 815L290 835L200 900" stroke="#55583a" strokeWidth="4" />
        <path d="M785 940L865 950L910 975L920 1030L980 1060L1010 1062" stroke="#425a36" strokeWidth="7" />
        <path d="M978 1020L990 1006L1018 1010L1030 1055L1050 1080" stroke="#284929" strokeWidth="17" />
        <path d="M1050 1080L1085 1095L1098 1120L1092 1155L1103 1185L1075 1220L1080 1245" stroke="#3a4e2c" strokeWidth="7" />
        <path d="M1058 1268L1085 1278L1100 1310" stroke="#ddd0b4" strokeWidth="7" />
        <path d="M1100 1310L1110 1370L1150 1385L1190 1445L1240 1480L1250 1520L1290 1545L1345 1562" stroke="#3c4c32" strokeWidth="8" />
      </g>
    </g>
    <g filter="url(#rough)" fill="#e0d2ae">
      <circle cx="2043" cy="444" r="2.2" /><circle cx="2050" cy="448" r="2.2" />
      <circle cx="2052" cy="454" r="2.2" /><circle cx="2058" cy="457" r="2.4" />
      <path d="M2001 475L2026 484L2030 490L2002 482Z" fill="#b89a6c" />
    </g>
    <path d="M1864 1013L1885 1018L1897 1023L1890 1026L1876 1019Z" fill="#33494a" filter="url(#rough)" />

    <GrainLayer x="1180" y="241" width="1180" height="979" filter="url(#grainLarge)" $mode="soft-light" $strength={0.4} />
    <GrainLayer x="1180" y="241" width="1180" height="979" filter="url(#grainFine)" $mode="overlay" $strength={0.26} />

    {/* graticule */}
    <g stroke="#d8d8d0" strokeOpacity=".28" strokeWidth="1.2">
      <path d="M1258.7 241V1220M1604 241V1220M1947.7 241V1220M2292.3 241V1220" />
      <path d="M1180 374.6H2360M1180 719.3H2360M1180 1063.3H2360" />
    </g>

    {/* state borders */}
    <g fill="none" stroke="#d4d4ce" strokeOpacity=".88" strokeWidth="1.9">
      <path d="M1606 241V390H1376L1375 391.5L1180 390.5" />
      <path d="M1604.5 390V1060M1180 1060H1850V1220" />
      <path d="M1604 730.5H2285L2288 737L2293 742L2308 750L2316 752.5L2323 757.5L2329 758.5L2340 769.5L2346 770.5L2353 768L2360 760" />
    </g>
  </Imagery>
);

/* ---------- data ---------- */

const before = [
  'Aerial Imagery', 'AVHRR', 'CEOS Legacy', 'Commercial Satellites', 'Declassified Data', 'Digital Elevation',
  'Digital Line Graphs', 'Digital Maps', 'EO-1', 'Global Fiducials', 'HCMM', 'ISERV', 'Land Cover',
];
const middle = ['LCMAP', 'NASA LPDAAC Collections', 'Radar'];
const after = ['UAS', 'Vegetation Monitoring', 'ISRO Resourcesat'];

/* name, label x, baseline y, pin x, pin y, letter spacing, font size */
const cities: [string, number, number, number, number, number?, number?][] = [
  ['Gillette', 1427, 504.5, 1426.4, 511.3, 0.6],
  ['Rapid City', 1704.5, 540.5, 1705, 547.8, 0.3],
  ['Aberdeen', 2285.5, 302, 2286, 311],
  ['Pierre', 2057.5, 490, 2057.3, 499.2, 1.1, 16],
  ['Casper', 1326, 747, 1325.4, 756.2, 0],
  ['Cheyenne', 1510, 1029, 1509.8, 1038.2, 0.3, 16],
  ['Fort Collins', 1416, 1119, 1478.8, 1127.4, 0.9],
  ['Greeley', 1526, 1144.5, 1526, 1152.8],
  ['Longmont', 1477, 1186.5, 1476, 1194.6, 0],
  ['Boulder', 1462.5, 1218, 1454.3, 1218.6],
  ['North Platte', 2007, 1028.5, 2007.7, 1038.3, 0.45],
  ['Grand Island', 2313, 1076.5, 2303.5, 1072, 0.3],
  ['Kearney', 2213.5, 1101, 2213.5, 1108.6],
  ['Hastings', 2306, 1127.5, 2298.5, 1127],
];

const CategoryRow = ({ name, open }: { name: string; open?: boolean }) => (
  <Row>
    <ToggleIcon open={open} />
    <Dots />
    {name}
  </Row>
);

const DataSetPanel = ({ scale, width, pad, actions }: { scale: number; width: number; pad: number; actions?: boolean }) => (
  <ThemeProvider theme={{ scale }}>
    <Panel $w={width} $pad={pad} $edge={actions}>
      <Tabs>
        <Tab $w={147.6}>Search Criteria</Tab>
        <Tab $w={99.6} $active>Data Sets</Tab>
        <Tab $w={164.4}>Additional Criteria</Tab>
        <Tab $w={99.6}>Results</Tab>
      </Tabs>
      <Sheet className="sheet">
        <Inner>
          <Heading>2. Select Your Data Set(s)</Heading>
          <Intro>
            Check the boxes for the data set(s) you want to search. When<br />
            done selecting data set(s), click the <em>Additional Criteria</em> or <em>Results</em><br />
            buttons below. Click the plus sign next to the category name to<br />
            show a list of data sets.
          </Intro>
          <Box $h={48.4}>
            <PrefilterCheckBox />
            <BoxLabel>Use Data Set Prefilter</BoxLabel>
            <Hint>(<a>What's This?</a>)</Hint>
          </Box>
          <Box $h={55}>
            <SearchLabel>Data Set Search:</SearchLabel>
            <SearchField aria-label="Data Set Search" />
          </Box>
          <ListBox>
            <Tree>
              {before.map((n) => <CategoryRow key={n} name={n} />)}
              <TallRow>
                <ToggleIcon />
                <Dots />
                Landsat
                <LandsatIcon />
              </TallRow>
              {middle.map((n) => <CategoryRow key={n} name={n} />)}
              <CategoryRow name="Sentinel" open />
              <ChildRow>
                <Branch />
                <CheckBox $on>
                  <svg viewBox="0 0 16 16">
                    <path d="M3 8.5L6.5 12L13 3.5" fill="none" stroke="#fff" strokeWidth="2.4" />
                  </svg>
                </CheckBox>
                <InfoIcon />
                <FootprintIcon />
                <CloudIcon />
                Sentinel-2
              </ChildRow>
              {after.map((n) => <CategoryRow key={n} name={n} />)}
            </Tree>
            <ScrollBar>
              <Arrow />
              <Thumb />
              <Arrow $down />
            </ScrollBar>
          </ListBox>
          {actions && (
            <Actions>
              <ActionButton $w={177}>Clear All Selected</ActionButton>
              <ActionButton $w={194}>Additional Criteria »</ActionButton>
              <ActionButton $w={105}>Results »</ActionButton>
            </Actions>
          )}
        </Inner>
      </Sheet>
    </Panel>
  </ThemeProvider>
);

export default function App() {
  return (
    <Page>
      <GlobalStyle />
      <Header>
        <Brand><Logo /></Brand>
        <NavBar>
          <NavTitle>EarthExplorer</NavTitle>
          <NavLink>Manage Criteria</NavLink>
        </NavBar>
        <NavShadow />
      </Header>
      <Body>
        <DataSetPanel scale={1.088} width={606} pad={7} />
        <DataSetPanel scale={1} width={561} pad={9} actions />
        <MapFrame>
          <Summary><b>Search Criteria Summary</b> (Show)</Summary>
          <MapCanvas>
            <Satellite />
            {cities.map(([n, x, y, px, py, ls, s]) => (
              <React.Fragment key={n}>
                <Pin $x={px} $y={py} />
                <City $x={x} $y={y} $ls={ls} $s={s}>{n}</City>
              </React.Fragment>
            ))}
            <StateName $x={2135} $y={425}>South Dakota</StateName>
            <StateName $x={2039} $y={908}>Nebraska</StateName>
            <StateName $x={2204} $y={1149}>Nebraska</StateName>
            <StateName $x={1180} $y={731}>ning</StateName>
            <Country $x={2046} $y={1222.5} $ls={6.8}>UNITED</Country>
            <Country $x={2193} $y={1222.5} $ls={9.4}>STATES</Country>
            <LayersButton><LayersIcon /></LayersButton>
          </MapCanvas>
          <Disclaimer>
            The provided maps are not for purchase or for download; it is to be used as a guide for reference and search purposes only.
          </Disclaimer>
        </MapFrame>
      </Body>
    </Page>
  );
}
